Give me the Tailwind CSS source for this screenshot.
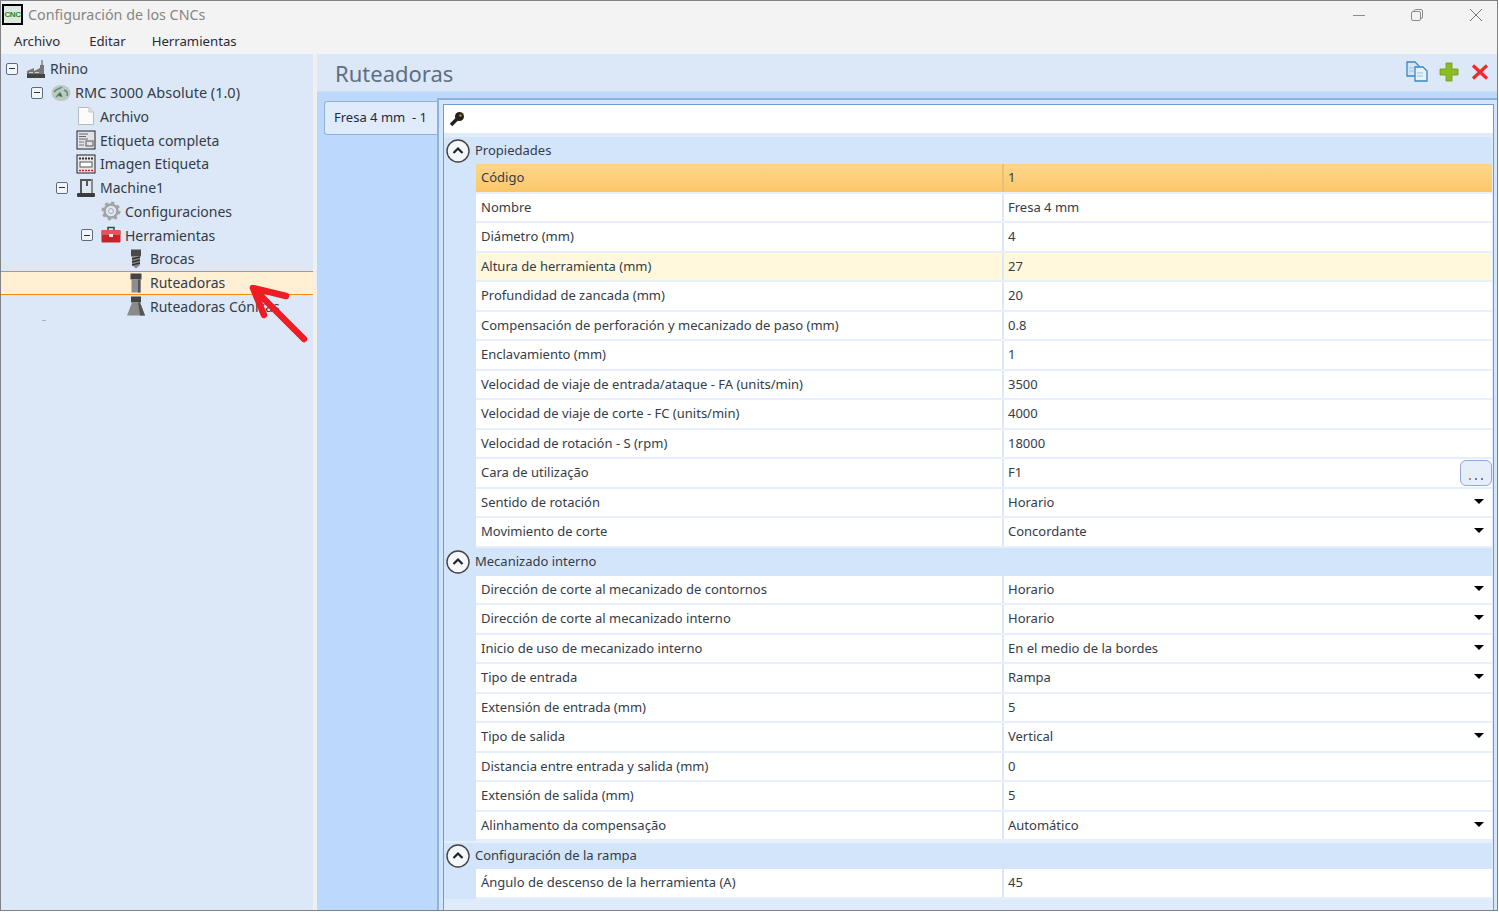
<!DOCTYPE html>
<html lang="es">
<head>
<meta charset="UTF-8">
<title>Configuración de los CNCs</title>
<script src="https://cdn.jsdelivr.net/npm/@tailwindcss/browser@4"></script>
</head>
<body class="bg-white overflow-hidden">
<div class="relative w-[1498px] h-[911px] border border-[#7f8287] flex flex-col font-['Noto_Sans',sans-serif] text-[13px] text-[#343c48] bg-[#f3f3f3] overflow-hidden">

  <!-- title bar -->
  <div class="h-[27px] flex items-center shrink-0">
    <div class="ml-[1px] w-[21px] h-[21px] border-2 border-black bg-[#dfe8df] flex items-center justify-center text-[8px] font-bold text-[#178a2e] leading-none tracking-[-0.5px] font-['Liberation_Sans',sans-serif]">CNC</div>
    <span class="ml-[5px] text-[14.3px] text-[#868686]">Configuración de los CNCs</span>
    <div class="ml-auto flex items-center h-full">
      <svg class="w-3 h-3 mr-[46px]" viewBox="0 0 12 12"><path d="M0 6.5H12" stroke="#8a8a8a"/></svg>
      <svg class="w-3 h-3 mr-[47px]" viewBox="0 0 12 12" fill="none" stroke="#8a8a8a"><rect x="0.5" y="2.5" width="9" height="9" rx="1.5"/><path d="M3 2.5V2a1.5 1.5 0 0 1 1.5-1.5H10A1.5 1.5 0 0 1 11.5 2v6A1.5 1.5 0 0 1 10 9.500"/></svg>
      <svg class="w-3 h-3 mr-[15px]" viewBox="0 0 12 12"><path d="M0 0L12 12M12 0L0 12" stroke="#7a7a7a"/></svg>
    </div>
  </div>

  <!-- menu -->
  <div class="h-[26px] pt-[2px] flex items-center shrink-0 text-[13.2px] text-[#2b2b3a]">
    <span class="ml-[13px]">Archivo</span>
    <span class="ml-[29px]">Editar</span>
    <span class="ml-[26px]">Herramientas</span>
  </div>

  <div class="flex flex-1 min-h-0">
    <!-- tree -->
    <div class="relative w-[312px] shrink-0 bg-[#dce8f7] pt-[3px] text-[14px]">
      <div class="flex items-center h-[23.75px] pl-[5px]">
        <span class="w-[20px]"><span class="flex items-center justify-center w-[12px] h-[12px] border border-[#5c6b80] bg-[#f2f6fc] rounded-[2px]"><span class="w-[6px] h-px bg-[#333]"></span></span></span>
        <svg class="w-5 h-5" viewBox="0 0 20 20"><path d="M15 1H17V6H15Z" fill="#9a9a9a"/><path d="M1 18V12L8 9V12L14 9V6H18V18Z" fill="#777"/><rect x="1" y="15" width="18" height="4" fill="#444"/><path d="M3 13.500H7M9 13.500H13" stroke="#d0d0d0"/></svg>
        <span class="ml-[4px]">Rhino</span>
      </div>
      <div class="flex items-center h-[23.75px] pl-[30px]">
        <span class="w-[20px]"><span class="flex items-center justify-center w-[12px] h-[12px] border border-[#5c6b80] bg-[#f2f6fc] rounded-[2px]"><span class="w-[6px] h-px bg-[#333]"></span></span></span>
        <svg class="w-5 h-5" viewBox="0 0 20 20"><ellipse cx="10" cy="10" rx="9.500" ry="8" fill="#bcc8c2"/><path d="M3 9C6 5 9 6 11 4M5 14L9 10L11 14M13 7C16 8 17 10 16 13" stroke="#5b8d73" stroke-width="1.400" fill="none"/><circle cx="9" cy="12" r="1.600" fill="#2e7a4e"/></svg>
        <span class="ml-[4px] text-[14.5px]">RMC 3000 Absolute (1.0)</span>
      </div>
      <div class="flex items-center h-[23.75px] pl-[75px]">
        <svg class="w-5 h-5" viewBox="0 0 20 20"><path d="M2.500 1.500H13L17.500 6V18.500H2.500Z" fill="#fbfbfb" stroke="#b8bcc2"/><path d="M13 1.500V6H17.500" fill="#e2e2e2" stroke="#c4c4c4"/></svg>
        <span class="ml-[4px]">Archivo</span>
      </div>
      <div class="flex items-center h-[23.75px] pl-[75px]">
        <svg class="w-5 h-5" viewBox="0 0 20 20"><rect x="1" y="1" width="18" height="18" fill="#dfe3e8" stroke="#222"/><path d="M3 4H12M3 6.500H10M3 9H12" stroke="#666"/><path d="M3 12H8M3 15H8" stroke="#777"/><rect x="10" y="11" width="7" height="5" fill="none" stroke="#555"/></svg>
        <span class="ml-[4px]">Etiqueta completa</span>
      </div>
      <div class="flex items-center h-[23.75px] pl-[75px]">
        <svg class="w-5 h-5" viewBox="0 0 20 20"><rect x="1" y="1" width="18" height="18" fill="#e8e8e8" stroke="#222"/><path d="M3 4.500H17" stroke="#333" stroke-width="2" stroke-dasharray="2 1"/><rect x="4" y="8" width="12" height="5" fill="#fff" stroke="#555"/><path d="M3 16.500H17" stroke="#d02020" stroke-width="1.500" stroke-dasharray="2 1"/></svg>
        <span class="ml-[4px]">Imagen Etiqueta</span>
      </div>
      <div class="flex items-center h-[23.75px] pl-[55px]">
        <span class="w-[20px]"><span class="flex items-center justify-center w-[12px] h-[12px] border border-[#5c6b80] bg-[#f2f6fc] rounded-[2px]"><span class="w-[6px] h-px bg-[#333]"></span></span></span>
        <svg class="w-5 h-5" viewBox="0 0 20 20" fill="#555"><path d="M4 1H15V3H6V15H4Z"/><path d="M15 1H17V15H15Z" fill="#8a8a8a"/><path d="M10 3H12V8H10Z"/><rect x="1" y="15" width="18" height="4" rx="1" fill="#3b3b3b"/></svg>
        <span class="ml-[4px]">Machine1</span>
      </div>
      <div class="flex items-center h-[23.75px] pl-[100px]">
        <svg class="w-5 h-5" viewBox="0 0 20 20"><circle cx="10" cy="10" r="6.500" fill="none" stroke="#a3a3a3" stroke-width="2.500"/><circle cx="10" cy="10" r="8" fill="none" stroke="#a3a3a3" stroke-width="3" stroke-dasharray="3 3.280"/><circle cx="10" cy="10" r="2.500" fill="#e4e8ee" stroke="#aaa"/></svg>
        <span class="ml-[4px]">Configuraciones</span>
      </div>
      <div class="flex items-center h-[23.75px] pl-[80px]">
        <span class="w-[20px]"><span class="flex items-center justify-center w-[12px] h-[12px] border border-[#5c6b80] bg-[#f2f6fc] rounded-[2px]"><span class="w-[6px] h-px bg-[#333]"></span></span></span>
        <svg class="w-5 h-5" viewBox="0 0 20 20"><path d="M7 5V2.500H13V5" fill="none" stroke="#444" stroke-width="1.500"/><rect x="0.500" y="5" width="19" height="12.500" rx="1" fill="#c8232c"/><rect x="0.500" y="5" width="19" height="5" rx="1" fill="#e0555a"/><rect x="8" y="9" width="4" height="3" fill="#eee"/></svg>
        <span class="ml-[4px]">Herramientas</span>
      </div>
      <div class="flex items-center h-[23.75px] pl-[125px]">
        <svg class="w-5 h-5" viewBox="0 0 20 20"><rect x="5" y="0.500" width="10" height="7" fill="#4a4a4a"/><path d="M6 7.500H14V16L10 19.500L6 16Z" fill="#888"/><path d="M6 10L14 8M6 13L14 11M6 16L14 14" stroke="#333" stroke-width="1.300"/></svg>
        <span class="ml-[4px]">Brocas</span>
      </div>
      <div class="flex items-center h-[23.75px] pl-[125px] bg-[#fff0d4] border-y border-[#f58a0f]">
        <svg class="w-5 h-5" viewBox="0 0 20 20"><rect x="4.500" y="0.500" width="11" height="6" fill="#444"/><rect x="5.500" y="6.500" width="9" height="13" fill="#8e8e8e"/><rect x="12" y="6.500" width="2.500" height="13" fill="#555"/></svg>
        <span class="ml-[4px]">Ruteadoras</span>
      </div>
      <div class="flex items-center h-[23.75px] pl-[125px]">
        <svg class="w-5 h-5" viewBox="0 0 20 20"><rect x="5" y="0.500" width="10" height="6" fill="#444"/><path d="M6 6.500H14L19 19.500H1Z" fill="#8a8a8a"/><path d="M12 6.500H14L19 19.500H14Z" fill="#555"/></svg>
        <span class="ml-[4px]">Ruteadoras Cónicas</span>
      </div>
      <span class="absolute left-[41px] top-[266px] w-[4px] h-px bg-[#a9b4c2]"></span>
    </div>

    <!-- splitter -->
    <div class="w-[4px] shrink-0 bg-[#f0f0f0]"></div>

    <!-- right side -->
    <div class="flex-1 min-w-0 flex flex-col bg-[#bcd8fb]">
      <div class="h-[38px] shrink-0 bg-[#dce8f7] border-b border-[#cfe0f6] flex items-center">
        <span class="ml-[18px] text-[22px] text-[#5d6f82] leading-none">Ruteadoras</span>
        <div class="ml-auto flex items-center mb-[2px]">
          <svg class="w-[22px] h-[21px] mr-[11px]" viewBox="0 0 22 21"><path d="M1 1H9L13 5V15H1Z" fill="#d3e6f3" stroke="#3a86c4" stroke-width="1.300"/><path d="M9 6H17L21 10V20H9Z" fill="#e6f1f8" stroke="#3a86c4" stroke-width="1.300"/><path d="M3 7H8M3 10H8M11 12H17M11 15H17" stroke="#9cc3de"/></svg>
          <svg class="w-[20px] h-[20px] mr-[12px]" viewBox="0 0 20 20"><path d="M7 1H13V7H19V13H13V19H7V13H1V7H7Z" fill="#8cbd22" stroke="#6d9a16" stroke-width="0.800"/></svg>
          <svg class="w-[18px] h-[16px] mr-[8px]" viewBox="0 0 18 16"><path d="M2 1.500L16 14.500M16 1.500L2 14.500" stroke="#ee2a2a" stroke-width="3.200"/></svg>
        </div>
      </div>

      <div class="flex flex-1 min-h-0 pt-[6px]">
        <!-- tab strip -->
        <div class="w-[120px] shrink-0 pl-[7px] pt-[3px]">
          <div class="h-[34px] bg-[#dfeafa] border border-[#8fb2dc] border-r-0 rounded-l-[3px] flex items-center pl-[9px] text-[13px] text-[#222b3a] whitespace-pre">Fresa 4 mm  - 1</div>
        </div>

        <!-- tab page -->
        <div class="flex-1 min-w-0 border-l-2 border-t-2 border-[#8fb2dc] bg-[#d3e5fb] pl-[4px] pt-[4px] pr-[3px] flex flex-col">
          <div class="border border-[#6f9bd0] flex-1 flex flex-col min-h-0 bg-[#dfeafa] border-b-0">
            <div class="h-[28px] bg-white shrink-0 flex items-center pl-[5px]">
              <svg class="w-[16px] h-[16px]" viewBox="0 0 16 16"><circle cx="10.500" cy="5.500" r="4.500" fill="#222"/><path d="M8 8L2 14" stroke="#222" stroke-width="3.500"/><circle cx="11.500" cy="4.500" r="1.200" fill="#c98a1e"/></svg>
            </div>
            <div class="mt-[3px] mr-[1px] bg-[#d3e5fb] border-t border-[#e3edfa] rounded-t-[3px]">
              <!-- Propiedades -->
              <div class="flex items-center h-[26px] mt-px pl-[2px]">
                <svg class="w-[24px] h-[24px]" viewBox="0 0 24 24"><circle cx="12" cy="12" r="11" fill="#f4f7fb" stroke="#444" stroke-width="1.400"/><path d="M7.500 14L12 9.500L16.500 14" fill="none" stroke="#222" stroke-width="2.200"/></svg>
                <span class="ml-[5px]">Propiedades</span>
              </div>
              <div class="ml-[32px]">
                <div class="flex items-center h-[29.5px] border-b-2 border-[#e6effb] bg-gradient-to-b from-[#fdd68a] to-[#fcc768]"><span class="w-[526px] pl-[5px]">Código</span><span class="self-stretch border-l-2 border-[#e8c078] pl-[4px] flex items-center">1</span></div>
                <div class="flex items-center h-[29.5px] border-b-2 border-[#e6effb] bg-white"><span class="w-[526px] pl-[5px]">Nombre</span><span class="self-stretch border-l-2 border-[#dbe7f7] pl-[4px] flex items-center">Fresa 4 mm</span></div>
                <div class="flex items-center h-[29.5px] border-b-2 border-[#e6effb] bg-white"><span class="w-[526px] pl-[5px]">Diámetro (mm)</span><span class="self-stretch border-l-2 border-[#dbe7f7] pl-[4px] flex items-center">4</span></div>
                <div class="flex items-center h-[29.5px] border-b-2 border-[#e6effb] bg-[#fff8dc]"><span class="w-[526px] pl-[5px]">Altura de herramienta (mm)</span><span class="self-stretch border-l-2 border-[#dbe7f7] pl-[4px] flex items-center">27</span></div>
                <div class="flex items-center h-[29.5px] border-b-2 border-[#e6effb] bg-white"><span class="w-[526px] pl-[5px]">Profundidad de zancada (mm)</span><span class="self-stretch border-l-2 border-[#dbe7f7] pl-[4px] flex items-center">20</span></div>
                <div class="flex items-center h-[29.5px] border-b-2 border-[#e6effb] bg-white"><span class="w-[526px] pl-[5px]">Compensación de perforación y mecanizado de paso (mm)</span><span class="self-stretch border-l-2 border-[#dbe7f7] pl-[4px] flex items-center">0.8</span></div>
                <div class="flex items-center h-[29.5px] border-b-2 border-[#e6effb] bg-white"><span class="w-[526px] pl-[5px]">Enclavamiento (mm)</span><span class="self-stretch border-l-2 border-[#dbe7f7] pl-[4px] flex items-center">1</span></div>
                <div class="flex items-center h-[29.5px] border-b-2 border-[#e6effb] bg-white"><span class="w-[526px] pl-[5px]">Velocidad de viaje de entrada/ataque - FA (units/min)</span><span class="self-stretch border-l-2 border-[#dbe7f7] pl-[4px] flex items-center">3500</span></div>
                <div class="flex items-center h-[29.5px] border-b-2 border-[#e6effb] bg-white"><span class="w-[526px] pl-[5px]">Velocidad de viaje de corte - FC (units/min)</span><span class="self-stretch border-l-2 border-[#dbe7f7] pl-[4px] flex items-center">4000</span></div>
                <div class="flex items-center h-[29.5px] border-b-2 border-[#e6effb] bg-white"><span class="w-[526px] pl-[5px]">Velocidad de rotación - S (rpm)</span><span class="self-stretch border-l-2 border-[#dbe7f7] pl-[4px] flex items-center">18000</span></div>
                <div class="relative flex items-center h-[29.5px] border-b-2 border-[#e6effb] bg-white"><span class="w-[526px] pl-[5px]">Cara de utilização</span><span class="self-stretch border-l-2 border-[#dbe7f7] pl-[4px] flex items-center">F1</span>
                  <span class="absolute right-0 top-[1px] w-[32px] h-[26px] border border-[#8fa9cf] rounded-[6px] bg-[#e6eefa] flex items-end justify-center pb-[5px] gap-[4px]"><span class="w-[2px] h-[2px] bg-[#c58a45]"></span><span class="w-[2px] h-[2px] bg-[#5f7fb5]"></span><span class="w-[2px] h-[2px] bg-[#5f7fb5]"></span></span></div>
                <div class="relative flex items-center h-[29.5px] border-b-2 border-[#e6effb] bg-white"><span class="w-[526px] pl-[5px]">Sentido de rotación</span><span class="self-stretch border-l-2 border-[#dbe7f7] pl-[4px] flex items-center">Horario</span><span class="absolute right-[8px] top-[10px] border-x-[5px] border-x-transparent border-t-[5px] border-t-black"></span></div>
                <div class="relative flex items-center h-[29.5px] border-b-2 border-[#e6effb] bg-white"><span class="w-[526px] pl-[5px]">Movimiento de corte</span><span class="self-stretch border-l-2 border-[#dbe7f7] pl-[4px] flex items-center">Concordante</span><span class="absolute right-[8px] top-[10px] border-x-[5px] border-x-transparent border-t-[5px] border-t-black"></span></div>
              </div>

              <!-- Mecanizado interno -->
              <div class="flex items-center h-[28px] pl-[2px]">
                <svg class="w-[24px] h-[24px]" viewBox="0 0 24 24"><circle cx="12" cy="12" r="11" fill="#f4f7fb" stroke="#444" stroke-width="1.400"/><path d="M7.500 14L12 9.500L16.500 14" fill="none" stroke="#222" stroke-width="2.200"/></svg>
                <span class="ml-[5px]">Mecanizado interno</span>
              </div>
              <div class="ml-[32px]">
                <div class="relative flex items-center h-[29.5px] border-b-2 border-[#e6effb] bg-white"><span class="w-[526px] pl-[5px]">Dirección de corte al mecanizado de contornos</span><span class="self-stretch border-l-2 border-[#dbe7f7] pl-[4px] flex items-center">Horario</span><span class="absolute right-[8px] top-[10px] border-x-[5px] border-x-transparent border-t-[5px] border-t-black"></span></div>
                <div class="relative flex items-center h-[29.5px] border-b-2 border-[#e6effb] bg-white"><span class="w-[526px] pl-[5px]">Dirección de corte al mecanizado interno</span><span class="self-stretch border-l-2 border-[#dbe7f7] pl-[4px] flex items-center">Horario</span><span class="absolute right-[8px] top-[10px] border-x-[5px] border-x-transparent border-t-[5px] border-t-black"></span></div>
                <div class="relative flex items-center h-[29.5px] border-b-2 border-[#e6effb] bg-white"><span class="w-[526px] pl-[5px]">Inicio de uso de mecanizado interno</span><span class="self-stretch border-l-2 border-[#dbe7f7] pl-[4px] flex items-center">En el medio de la bordes</span><span class="absolute right-[8px] top-[10px] border-x-[5px] border-x-transparent border-t-[5px] border-t-black"></span></div>
                <div class="relative flex items-center h-[29.5px] border-b-2 border-[#e6effb] bg-white"><span class="w-[526px] pl-[5px]">Tipo de entrada</span><span class="self-stretch border-l-2 border-[#dbe7f7] pl-[4px] flex items-center">Rampa</span><span class="absolute right-[8px] top-[10px] border-x-[5px] border-x-transparent border-t-[5px] border-t-black"></span></div>
                <div class="flex items-center h-[29.5px] border-b-2 border-[#e6effb] bg-white"><span class="w-[526px] pl-[5px]">Extensión de entrada (mm)</span><span class="self-stretch border-l-2 border-[#dbe7f7] pl-[4px] flex items-center">5</span></div>
                <div class="relative flex items-center h-[29.5px] border-b-2 border-[#e6effb] bg-white"><span class="w-[526px] pl-[5px]">Tipo de salida</span><span class="self-stretch border-l-2 border-[#dbe7f7] pl-[4px] flex items-center">Vertical</span><span class="absolute right-[8px] top-[10px] border-x-[5px] border-x-transparent border-t-[5px] border-t-black"></span></div>
                <div class="flex items-center h-[29.5px] border-b-2 border-[#e6effb] bg-white"><span class="w-[526px] pl-[5px]">Distancia entre entrada y salida (mm)</span><span class="self-stretch border-l-2 border-[#dbe7f7] pl-[4px] flex items-center">0</span></div>
                <div class="flex items-center h-[29.5px] border-b-2 border-[#e6effb] bg-white"><span class="w-[526px] pl-[5px]">Extensión de salida (mm)</span><span class="self-stretch border-l-2 border-[#dbe7f7] pl-[4px] flex items-center">5</span></div>
                <div class="relative flex items-center h-[29.5px] border-b-2 border-[#e6effb] bg-white"><span class="w-[526px] pl-[5px]">Alinhamento da compensação</span><span class="self-stretch border-l-2 border-[#dbe7f7] pl-[4px] flex items-center">Automático</span><span class="absolute right-[8px] top-[10px] border-x-[5px] border-x-transparent border-t-[5px] border-t-black"></span></div>
              </div>

              <!-- Configuración de la rampa -->
              <div class="flex items-center h-[28px] pl-[2px] border-t-2 border-[#e6effb]">
                <svg class="w-[24px] h-[24px]" viewBox="0 0 24 24"><circle cx="12" cy="12" r="11" fill="#f4f7fb" stroke="#444" stroke-width="1.400"/><path d="M7.500 14L12 9.500L16.500 14" fill="none" stroke="#222" stroke-width="2.200"/></svg>
                <span class="ml-[5px]">Configuración de la rampa</span>
              </div>
              <div class="ml-[32px]">
                <div class="flex items-center h-[29.5px] border-b-2 border-[#e6effb] bg-white"><span class="w-[526px] pl-[5px]">Ángulo de descenso de la herramienta (A)</span><span class="self-stretch border-l-2 border-[#dbe7f7] pl-[4px] flex items-center">45</span></div>
              </div>
            </div>
          </div>
        </div>
      </div>
    </div>
  </div>

  <!-- annotation arrow -->
  <svg class="absolute left-[247px] top-[284px] w-[65px] h-[60px]" viewBox="0 0 65 60"><path d="M5 3L56 54M5 3L38 11M5 3L16 30" fill="none" stroke="#ee1c25" stroke-width="6.500" stroke-linecap="round"/></svg>
</div>
</body>
</html>
